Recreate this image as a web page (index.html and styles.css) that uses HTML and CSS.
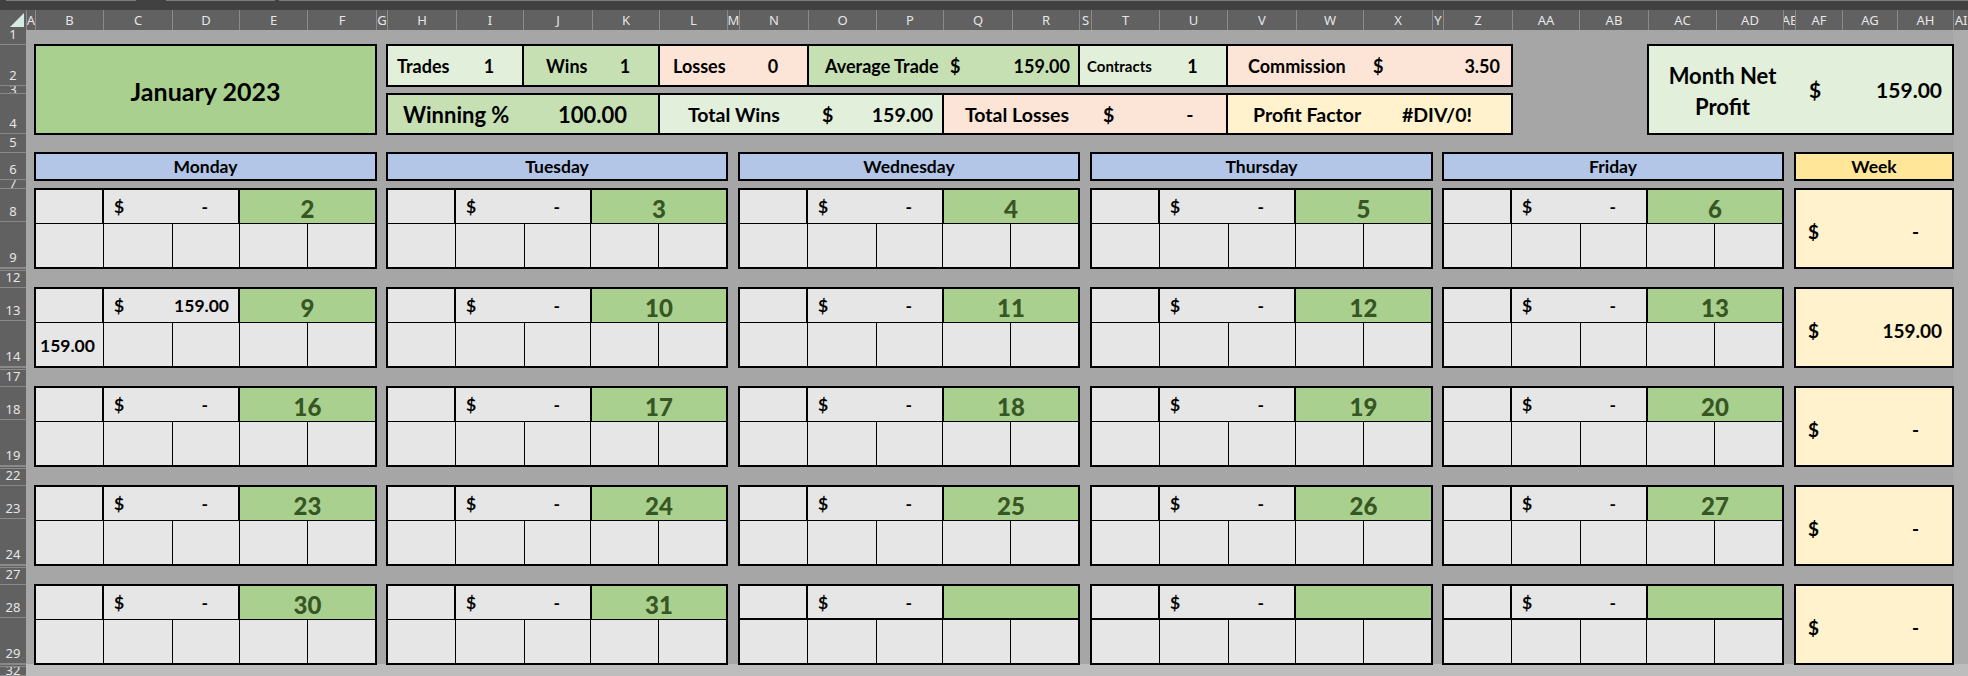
FILE: index.html
```html
<!DOCTYPE html>
<html>
<head>
<meta charset="utf-8">
<title>January 2023</title>
<link rel="stylesheet" href="styles.css">
</head>
<body>
<div class="topbar"><span class="seg s1"></span><span class="seg s2"></span><span class="seg s3"></span></div>
<div class="colheads">
  <div class="corner"><svg width="26" height="20" viewBox="0 0 26 20"><polygon points="10,17 24,17 24,3" fill="#d6ece0"/></svg></div>
  <div class="ch">A</div><div class="ch">B</div><div class="ch">C</div><div class="ch">D</div><div class="ch">E</div><div class="ch">F</div><div class="ch">G</div>
  <div class="ch">H</div><div class="ch">I</div><div class="ch">J</div><div class="ch">K</div><div class="ch">L</div><div class="ch">M</div>
  <div class="ch">N</div><div class="ch">O</div><div class="ch">P</div><div class="ch">Q</div><div class="ch">R</div><div class="ch">S</div>
  <div class="ch">T</div><div class="ch">U</div><div class="ch">V</div><div class="ch">W</div><div class="ch">X</div><div class="ch">Y</div>
  <div class="ch">Z</div><div class="ch">AA</div><div class="ch">AB</div><div class="ch">AC</div><div class="ch">AD</div><div class="ch">AE</div>
  <div class="ch">AF</div><div class="ch">AG</div><div class="ch">AH</div><div class="ch last">AI</div>
</div>
<div class="main">
  <div class="rowheads">
    <div class="rh">1</div><div class="rh">2</div><div class="rh tiny">3</div><div class="rh">4</div><div class="rh">5</div><div class="rh">6</div><div class="rh tiny">7</div>
    <div class="rh">8</div><div class="rh">9</div><div class="rh hid">12</div>
    <div class="rh">13</div><div class="rh">14</div><div class="rh hid">17</div>
    <div class="rh">18</div><div class="rh">19</div><div class="rh hid">22</div>
    <div class="rh">23</div><div class="rh">24</div><div class="rh hid">27</div>
    <div class="rh">28</div><div class="rh">29</div><div class="rh hid tiny">32</div>
  </div>
  <div class="sheet">
    <div class="fill-ai"></div>
    <div class="fill-bottom"></div>

    <!-- Title -->
    <div class="box title">January 2023</div>

    <!-- Stats top row -->
    <div class="box stat c-trades lgreen"><span class="lbl">Trades</span><span class="v center">1</span></div>
    <div class="box stat c-wins mgreen"><span class="lbl">Wins</span><span class="v center">1</span></div>
    <div class="box stat c-losses peach"><span class="lbl">Losses</span><span class="v center">0</span></div>
    <div class="box stat c-avg mgreen"><span class="lbl">Average Trade</span><span class="v money"><span class="cur">$</span><span class="amt">159.00</span></span></div>
    <div class="box stat c-contracts lgreen"><span class="lbl small">Contracts</span><span class="v center">1</span></div>
    <div class="box stat c-comm peach"><span class="lbl">Commission</span><span class="v money"><span class="cur">$</span><span class="amt">3.50</span></span></div>

    <!-- Stats bottom row -->
    <div class="box stat c-winpct mgreen"><span class="lbl">Winning %</span><span class="v center">100.00</span></div>
    <div class="box stat c-twins lgreen"><span class="lbl">Total Wins</span><span class="v money"><span class="cur">$</span><span class="amt">159.00</span></span></div>
    <div class="box stat c-tloss peach"><span class="lbl">Total Losses</span><span class="v money"><span class="cur">$</span><span class="amt dash">-</span></span></div>
    <div class="box stat c-pf yellow"><span class="lbl">Profit Factor</span><span class="v center">#DIV/0!</span></div>

    <!-- Month net -->
    <div class="box stat c-net lgreen"><span class="lbl netlbl">Month Net<br>Profit</span><span class="v money"><span class="cur">$</span><span class="amt">159.00</span></span></div>

    <!-- Day headers -->
    <div class="box dayhead d1">Monday</div>
    <div class="box dayhead d2">Tuesday</div>
    <div class="box dayhead d3">Wednesday</div>
    <div class="box dayhead d4">Thursday</div>
    <div class="box dayhead d5">Friday</div>
    <div class="box dayhead weekhead">Week</div>

    <!-- Week 1 -->
    <div class="box day d1 w1"><div class="top"><div class="c"></div><div class="c money"><span class="cur">$</span><span class="amt dash">-</span></div><div class="num">2</div></div><div class="bot"><div class="c"></div><div class="c"></div><div class="c"></div><div class="c"></div><div class="c"></div></div></div>
    <div class="box day d2 w1"><div class="top"><div class="c"></div><div class="c money"><span class="cur">$</span><span class="amt dash">-</span></div><div class="num">3</div></div><div class="bot"><div class="c"></div><div class="c"></div><div class="c"></div><div class="c"></div><div class="c"></div></div></div>
    <div class="box day d3 w1"><div class="top"><div class="c"></div><div class="c money"><span class="cur">$</span><span class="amt dash">-</span></div><div class="num">4</div></div><div class="bot"><div class="c"></div><div class="c"></div><div class="c"></div><div class="c"></div><div class="c"></div></div></div>
    <div class="box day d4 w1"><div class="top"><div class="c"></div><div class="c money"><span class="cur">$</span><span class="amt dash">-</span></div><div class="num">5</div></div><div class="bot"><div class="c"></div><div class="c"></div><div class="c"></div><div class="c"></div><div class="c"></div></div></div>
    <div class="box day d5 w1"><div class="top"><div class="c"></div><div class="c money"><span class="cur">$</span><span class="amt dash">-</span></div><div class="num">6</div></div><div class="bot"><div class="c"></div><div class="c"></div><div class="c"></div><div class="c"></div><div class="c"></div></div></div>
    <div class="box week w1"><span class="cur">$</span><span class="amt dash">-</span></div>

    <!-- Week 2 -->
    <div class="box day d1 w2"><div class="top"><div class="c"></div><div class="c money"><span class="cur">$</span><span class="amt">159.00</span></div><div class="num">9</div></div><div class="bot"><div class="c lone">159.00</div><div class="c"></div><div class="c"></div><div class="c"></div><div class="c"></div></div></div>
    <div class="box day d2 w2"><div class="top"><div class="c"></div><div class="c money"><span class="cur">$</span><span class="amt dash">-</span></div><div class="num">10</div></div><div class="bot"><div class="c"></div><div class="c"></div><div class="c"></div><div class="c"></div><div class="c"></div></div></div>
    <div class="box day d3 w2"><div class="top"><div class="c"></div><div class="c money"><span class="cur">$</span><span class="amt dash">-</span></div><div class="num">11</div></div><div class="bot"><div class="c"></div><div class="c"></div><div class="c"></div><div class="c"></div><div class="c"></div></div></div>
    <div class="box day d4 w2"><div class="top"><div class="c"></div><div class="c money"><span class="cur">$</span><span class="amt dash">-</span></div><div class="num">12</div></div><div class="bot"><div class="c"></div><div class="c"></div><div class="c"></div><div class="c"></div><div class="c"></div></div></div>
    <div class="box day d5 w2"><div class="top"><div class="c"></div><div class="c money"><span class="cur">$</span><span class="amt dash">-</span></div><div class="num">13</div></div><div class="bot"><div class="c"></div><div class="c"></div><div class="c"></div><div class="c"></div><div class="c"></div></div></div>
    <div class="box week w2"><span class="cur">$</span><span class="amt">159.00</span></div>

    <!-- Week 3 -->
    <div class="box day d1 w3"><div class="top"><div class="c"></div><div class="c money"><span class="cur">$</span><span class="amt dash">-</span></div><div class="num">16</div></div><div class="bot"><div class="c"></div><div class="c"></div><div class="c"></div><div class="c"></div><div class="c"></div></div></div>
    <div class="box day d2 w3"><div class="top"><div class="c"></div><div class="c money"><span class="cur">$</span><span class="amt dash">-</span></div><div class="num">17</div></div><div class="bot"><div class="c"></div><div class="c"></div><div class="c"></div><div class="c"></div><div class="c"></div></div></div>
    <div class="box day d3 w3"><div class="top"><div class="c"></div><div class="c money"><span class="cur">$</span><span class="amt dash">-</span></div><div class="num">18</div></div><div class="bot"><div class="c"></div><div class="c"></div><div class="c"></div><div class="c"></div><div class="c"></div></div></div>
    <div class="box day d4 w3"><div class="top"><div class="c"></div><div class="c money"><span class="cur">$</span><span class="amt dash">-</span></div><div class="num">19</div></div><div class="bot"><div class="c"></div><div class="c"></div><div class="c"></div><div class="c"></div><div class="c"></div></div></div>
    <div class="box day d5 w3"><div class="top"><div class="c"></div><div class="c money"><span class="cur">$</span><span class="amt dash">-</span></div><div class="num">20</div></div><div class="bot"><div class="c"></div><div class="c"></div><div class="c"></div><div class="c"></div><div class="c"></div></div></div>
    <div class="box week w3"><span class="cur">$</span><span class="amt dash">-</span></div>

    <!-- Week 4 -->
    <div class="box day d1 w4"><div class="top"><div class="c"></div><div class="c money"><span class="cur">$</span><span class="amt dash">-</span></div><div class="num">23</div></div><div class="bot"><div class="c"></div><div class="c"></div><div class="c"></div><div class="c"></div><div class="c"></div></div></div>
    <div class="box day d2 w4"><div class="top"><div class="c"></div><div class="c money"><span class="cur">$</span><span class="amt dash">-</span></div><div class="num">24</div></div><div class="bot"><div class="c"></div><div class="c"></div><div class="c"></div><div class="c"></div><div class="c"></div></div></div>
    <div class="box day d3 w4"><div class="top"><div class="c"></div><div class="c money"><span class="cur">$</span><span class="amt dash">-</span></div><div class="num">25</div></div><div class="bot"><div class="c"></div><div class="c"></div><div class="c"></div><div class="c"></div><div class="c"></div></div></div>
    <div class="box day d4 w4"><div class="top"><div class="c"></div><div class="c money"><span class="cur">$</span><span class="amt dash">-</span></div><div class="num">26</div></div><div class="bot"><div class="c"></div><div class="c"></div><div class="c"></div><div class="c"></div><div class="c"></div></div></div>
    <div class="box day d5 w4"><div class="top"><div class="c"></div><div class="c money"><span class="cur">$</span><span class="amt dash">-</span></div><div class="num">27</div></div><div class="bot"><div class="c"></div><div class="c"></div><div class="c"></div><div class="c"></div><div class="c"></div></div></div>
    <div class="box week w4"><span class="cur">$</span><span class="amt dash">-</span></div>

    <!-- Week 5 -->
    <div class="box day d1 w5"><div class="top"><div class="c"></div><div class="c money"><span class="cur">$</span><span class="amt dash">-</span></div><div class="num">30</div></div><div class="bot"><div class="c"></div><div class="c"></div><div class="c"></div><div class="c"></div><div class="c"></div></div></div>
    <div class="box day d2 w5"><div class="top"><div class="c"></div><div class="c money"><span class="cur">$</span><span class="amt dash">-</span></div><div class="num">31</div></div><div class="bot"><div class="c"></div><div class="c"></div><div class="c"></div><div class="c"></div><div class="c"></div></div></div>
    <div class="box day d3 w5"><div class="top"><div class="c"></div><div class="c money"><span class="cur">$</span><span class="amt dash">-</span></div><div class="num"></div></div><div class="bot"><div class="c"></div><div class="c"></div><div class="c"></div><div class="c"></div><div class="c"></div></div></div>
    <div class="box day d4 w5"><div class="top"><div class="c"></div><div class="c money"><span class="cur">$</span><span class="amt dash">-</span></div><div class="num"></div></div><div class="bot"><div class="c"></div><div class="c"></div><div class="c"></div><div class="c"></div><div class="c"></div></div></div>
    <div class="box day d5 w5"><div class="top"><div class="c"></div><div class="c money"><span class="cur">$</span><span class="amt dash">-</span></div><div class="num"></div></div><div class="bot"><div class="c"></div><div class="c"></div><div class="c"></div><div class="c"></div><div class="c"></div></div></div>
    <div class="box week w5"><span class="cur">$</span><span class="amt dash">-</span></div>
  </div>
</div>
</body>
</html>
```
FILE: styles.css
```css
:root {
  --cols: 9px 68px 69px 67px 68px 69px 11px 69px 67px 69px 67px 68px 12px 69px 68px 67px 69px 67px 12px 68px 68px 69px 67px 69px 11px 69px 67px 69px 68px 67px 12px 47px 55px 56px 15px;
  --rows: 15px 41px 8px 40px 19px 27px 9px 33px 46px 20px 33px 46px 20px 33px 46px 20px 33px 46px 20px 33px 46px 12px;
}
* { box-sizing: border-box; }
html, body { margin: 0; padding: 0; }
body {
  width: 1968px;
  height: 676px;
  overflow: hidden;
  background: #a6a6a6;
  font-family: "Lato", "Open Sans", sans-serif;
  color: #000;
}

/* window chrome */
.topbar {
  height: 10px;
  background: #414141;
  display: flex;
}
.seg { height: 1px; background: #7c7c7c; }
.s1 { margin-left: 6px; width: 130px; }
.s2 { margin-left: 30px; width: 109px; }
.s3 { margin-left: 4px; flex: 1; }

.colheads {
  display: grid;
  grid-template-columns: 26px var(--cols);
  height: 20px;
  background: #616161;
}
.corner { height: 20px; }
.corner svg { display: block; }
.ch {
  font-family: "Noto Sans", "Open Sans", sans-serif;
  font-size: 13px;
  line-height: 20px;
  color: #e6e6e6;
  text-align: center;
  overflow: hidden;
  white-space: nowrap;
  border-left: 1px solid #8a8a8a;
  display: flex;
  justify-content: center;
}

.main { display: flex; height: 646px; }
.rowheads {
  width: 26px;
  flex: none;
  display: grid;
  grid-template-rows: var(--rows);
  background: #616161;
}
.rh {
  font-family: "Noto Sans", "Open Sans", sans-serif;
  font-size: 13px;
  line-height: 15px;
  color: #e6e6e6;
  display: flex;
  align-items: flex-end;
  justify-content: center;
  padding-bottom: 2px;
  overflow: hidden;
  border-bottom: 1px solid #8a8a8a;
  min-height: 0;
}
.rh.hid { border-top: 3px double #8a8a8a; }
.rh.tiny {
  line-height: 6px;
  padding-bottom: 0;
  align-items: flex-start;
}

.sheet {
  flex: none;
  width: 1942px;
  display: grid;
  grid-template-columns: var(--cols);
  grid-template-rows: var(--rows);
  background: #a6a6a6;
  border-right: 3px solid #6a6a6a;
}
.fill-ai { grid-column: 35; grid-row: 1 / -1; background: #acacac; }
.fill-bottom { grid-column: 1 / -1; grid-row: 22; background: #bdbdbd; }

/* generic bordered box */
.box {
  margin: -1px;
  border: 2px solid #000;
  font-weight: 700;
  min-width: 0;
  min-height: 0;
}

.lgreen { background: #e2efda; }
.mgreen { background: #c6e0b4; }
.peach { background: #fce4d6; }
.yellow { background: #fff2cc; }

.title {
  grid-column: 2 / 7;
  grid-row: 2 / 5;
  background: #a9d08e;
  display: flex;
  align-items: center;
  justify-content: center;
  font-size: 25px;
  padding-top: 3px;
}

/* stat boxes */
.stat {
  display: grid;
  align-items: center;
  white-space: nowrap;
  font-size: 18px;
}
.stat .v.center { text-align: center; }
.stat .v.money, .day .money, .week {
  display: flex;
  align-items: center;
  justify-content: space-between;
}
.lbl.small { font-size: 15px; }

.c-trades { grid-column: 8 / 10; grid-row: 2; grid-template-columns: 68px 1fr; }
.c-trades .lbl { padding-left: 9px; }
.c-wins { grid-column: 10 / 12; grid-row: 2; grid-template-columns: 68px 1fr; }
.c-wins .lbl { padding-left: 22px; }
.c-losses { grid-column: 12 / 15; grid-row: 2; grid-template-columns: 79px 1fr; }
.c-losses .lbl { padding-left: 13px; }
.c-avg { grid-column: 15 / 19; grid-row: 2; grid-template-columns: 134px 1fr; }
.c-avg .lbl { padding-left: 16px; }
.c-avg .v { padding-left: 7px; padding-right: 8px; }
.c-contracts { grid-column: 19 / 22; grid-row: 2; grid-template-columns: 79px 1fr; }
.c-contracts .lbl { padding-left: 7px; }
.c-comm { grid-column: 22 / 27; grid-row: 2; grid-template-columns: 135px 1fr; }
.c-comm .lbl { padding-left: 20px; }
.c-comm .v { padding-left: 10px; padding-right: 11px; }

.c-winpct { grid-column: 8 / 12; grid-row: 4; grid-template-columns: 135px 1fr; font-size: 22px; }
.c-winpct .lbl { padding-left: 15px; }
.c-winpct .v { padding-left: 4px; }
.c-twins { grid-column: 12 / 17; grid-row: 4; grid-template-columns: 148px 1fr; font-size: 19.5px; }
.c-twins .lbl { padding-left: 28px; }
.c-twins .v { padding-left: 14px; padding-right: 9px; }
.c-tloss { grid-column: 17 / 22; grid-row: 4; grid-template-columns: 147px 1fr; font-size: 19.5px; }
.c-tloss .lbl { padding-left: 21px; }
.c-tloss .v { padding-left: 12px; padding-right: 9px; }
.c-pf { grid-column: 22 / 27; grid-row: 4; grid-template-columns: 135px 1fr; font-size: 19.5px; }
.c-pf .lbl { padding-left: 25px; }

.c-net { grid-column: 29 / 35; grid-row: 2 / 5; grid-template-columns: 147px 1fr; font-size: 22px; }
.netlbl { text-align: center; line-height: 31px; padding-top: 2px; }
.c-net .v { padding-left: 13px; padding-right: 10px; font-size: 21px; }

.amt.dash { padding-right: 1.2em; }

/* day headers */
.dayhead {
  grid-row: 6;
  background: #b4c6e7;
  display: flex;
  align-items: center;
  justify-content: center;
  font-size: 17.5px;
}
.d1 { grid-column: 2 / 7; }
.d2 { grid-column: 8 / 13; }
.d3 { grid-column: 14 / 19; }
.d4 { grid-column: 20 / 25; }
.d5 { grid-column: 26 / 31; }
.weekhead { grid-column: 32 / 35; background: #ffe699; }

.w1 { grid-row: 8 / 10; }
.w2 { grid-row: 11 / 13; }
.w3 { grid-row: 14 / 16; }
.w4 { grid-row: 17 / 19; }
.w5 { grid-row: 20 / 22; }

/* day blocks */
.day {
  background: #000;
  display: grid;
  grid-template-rows: 32px 1fr;
  row-gap: 2px;
  font-size: 17.5px;
}
.day .top {
  display: grid;
  grid-template-columns: 66px 134px 1fr;
  column-gap: 2px;
}
.day .bot {
  display: grid;
  grid-template-columns: 67fr 68fr 66fr 67fr 67fr;
  column-gap: 1px;
}
.day .c { background: #e7e6e6; }
.day .money { padding-left: 10px; padding-right: 9px; }
.day .num {
  background: #a9d08e;
  color: #375623;
  font-size: 24px;
  font-weight: 900;
  display: flex;
  align-items: center;
  justify-content: center;
  padding-top: 4px;
}
.day .c.lone {
  display: flex;
  align-items: center;
  padding-left: 4px;
  padding-top: 2px;
}

/* week totals */
.week {
  grid-column: 32 / 35;
  background: #fff2cc;
  font-size: 19px;
  padding-left: 12px;
  padding-right: 10px;
  padding-top: 6px;
}
```
